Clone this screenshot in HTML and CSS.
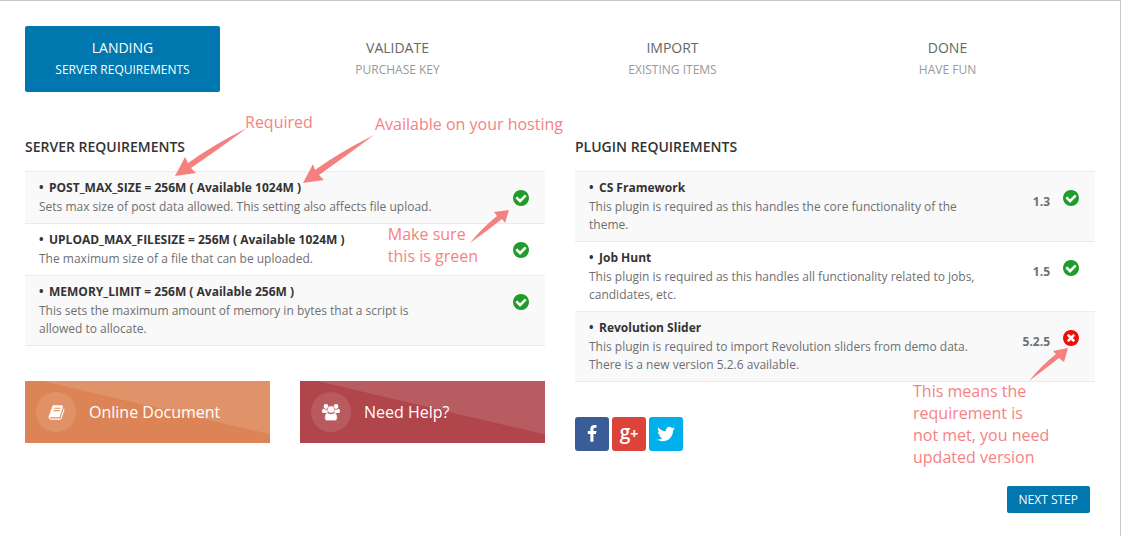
FILE: index.html
```html
<!DOCTYPE html>
<html lang="en">
<head>
<meta charset="utf-8">
<title>Server Requirements</title>
<link rel="stylesheet" href="styles.css">
</head>
<body>
<svg class="sprite" aria-hidden="true">
  <symbol id="check" viewBox="128 128 1536 1536"><path d="M1412 734q0-28-18-46l-91-90q-19-19-45-19t-45 19l-408 407-226-226q-19-19-45-19t-45 19l-91 90q-18 18-18 46 0 27 18 45l362 362q19 19 45 19 27 0 46-19l543-543q18-18 18-45zm252 162q0 209-103 385.5t-279.5 279.5-385.5 103-385.5-103-279.5-279.5-103-385.5 103-385.5 279.5-279.5 385.5-103 385.5 103 279.5 279.5 103 385.5z"/></symbol>
  <symbol id="cross" viewBox="128 128 1536 1536"><path d="M1277 1122q0-26-19-45l-181-181 181-181q19-19 19-45 0-27-19-46l-90-90q-19-19-46-19-26 0-45 19l-181 181-181-181q-19-19-45-19-27 0-46 19l-90 90q-19 19-19 46 0 26 19 45l181 181-181 181q-19 19-19 45 0 27 19 46l90 90q19 19 46 19 26 0 45-19l181-181 181 181q19 19 45 19 27 0 46-19l90-90q19-19 19-46zm387-226q0 209-103 385.5t-279.5 279.5-385.5 103-385.5-103-279.5-279.5-103-385.5 103-385.5 279.5-279.5 385.5-103 385.5 103 279.5 279.5 103 385.5z"/></symbol>
</svg>
<main class="wizard">
  <nav class="steps" aria-label="Setup steps">
    <a class="step step-active" href="#landing" aria-current="step"><span class="step-name">LANDING</span><span class="step-note">SERVER REQUIREMENTS</span></a>
    <a class="step" href="#validate"><span class="step-name">VALIDATE</span><span class="step-note">PURCHASE KEY</span></a>
    <a class="step" href="#import"><span class="step-name">IMPORT</span><span class="step-note">EXISTING ITEMS</span></a>
    <a class="step" href="#done"><span class="step-name">DONE</span><span class="step-note">HAVE FUN</span></a>
  </nav>
  <div class="columns">
    <section class="column">
      <h2 class="heading">SERVER REQUIREMENTS</h2>
      <ul class="list">
        <li class="row">
          <div class="info"><h3 class="name">POST_MAX_SIZE = 256M ( Available 1024M )</h3><p class="desc">Sets max size of post data allowed. This setting also affects file upload.</p></div>
          <svg class="status ok" role="img" aria-label="Met"><use href="#check"/></svg>
        </li>
        <li class="row">
          <div class="info"><h3 class="name">UPLOAD_MAX_FILESIZE = 256M ( Available 1024M )</h3><p class="desc">The maximum size of a file that can be uploaded.</p></div>
          <svg class="status ok" role="img" aria-label="Met"><use href="#check"/></svg>
        </li>
        <li class="row">
          <div class="info"><h3 class="name">MEMORY_LIMIT = 256M ( Available 256M )</h3><p class="desc">This sets the maximum amount of memory in bytes that a script is allowed to allocate.</p></div>
          <svg class="status ok" role="img" aria-label="Met"><use href="#check"/></svg>
        </li>
      </ul>
      <div class="cards">
        <a class="card card-docs" href="#docs">
          <span class="badge"><svg class="badge-icon" viewBox="0 0 1792 1792" aria-hidden="true"><path d="M1703 478q40 57 18 129l-275 906q-19 64-76.5 107.5t-122.5 43.5h-923q-77 0-148.5-53.5t-99.5-131.5q-24-67-2-127 0-4 3-27t4-37q1-8-3-21.5t-3-19.5q2-11 8-21t16.5-23.5 16.5-23.5q23-38 45-91.5t30-91.5q3-10 .5-30t-.5-28q3-11 17-28t17-23q21-36 42-92t25-90q1-9-2.5-32t.5-28q4-13 22-30.5t22-22.5q19-26 42.5-84.5t27.5-96.5q1-8-3-25.5t-2-26.5q2-8 9-18t18-23 17-21q8-12 16.5-30.5t15-35 16-36 19.5-32 26.5-23.5 36-11.5 47.5 5.5l-1 3q38-9 51-9h761q74 0 114 56t18 130l-274 906q-36 119-71.5 153.5t-128.5 34.5h-869q-27 0-38 15-11 16-1 43 24 70 144 70h923q29 0 56-15.5t35-41.5l300-987q7-22 5-57 38 15 59 43zm-1064 2q-4 13 2 22.5t20 9.5h608q13 0 25.5-9.5t16.5-22.5l21-64q4-13-2-22.5t-20-9.5h-608q-13 0-25.5 9.5t-16.5 22.5zm-83 256q-4 13 2 22.5t20 9.5h608q13 0 25.5-9.5t16.5-22.5l21-64q4-13-2-22.5t-20-9.5h-608q-13 0-25.5 9.5t-16.5 22.5z"/></svg></span>
          <span class="card-text">Online Document</span>
        </a>
        <a class="card card-help" href="#help">
          <span class="badge"><svg class="badge-people" viewBox="0 0 18 17" aria-hidden="true"><circle cx="4" cy="2.5" r="2.4"/><circle cx="14" cy="2.5" r="2.4"/><path d="M0 7.5C0 5.500 .8 4.800 1.600 4.800Q4 6.400 6 5V9H1.500Q0 9 0 7.500zM18 7.500C18 5.500 17.200 4.800 16.400 4.800Q14 6.400 12 5V9H16.500Q18 9 18 7.500z"/><g class="badge-front"><circle cx="9" cy="5.500" r="3.700"/><path d="M2.700 13.900C2.700 10.500 3.700 8.700 5.500 8.700Q9 11.400 12.500 8.700C14.300 8.700 15.300 10.500 15.300 13.900Q15.300 16.700 12.700 16.700H5.300Q2.700 16.700 2.700 13.900z"/></g></svg></span>
          <span class="card-text">Need Help?</span>
        </a>
      </div>
      <svg class="arrow arrow-required" viewBox="174 127 74 50" aria-hidden="true"><path d="M175 176L185 157L188 163Q213 145 247 128Q219 149 191 168L196 173z"/></svg>
      <p class="note note-required">Required</p>
      <svg class="arrow arrow-available" viewBox="302 134 74 50" aria-hidden="true"><path d="M303 183L313 164L315 170Q340 152 374 135Q346 156 319 175L324 180z"/></svg>
      <p class="note note-available">Available on your hosting</p>
      <svg class="arrow arrow-green" viewBox="469 209 41 35" aria-hidden="true"><path d="M509 210L494 212L497 216Q482 228 470 243Q487 231 502 219L505 223z"/></svg>
      <p class="note note-green">Make sure<br>this is green</p>
    </section>
    <section class="column">
      <h2 class="heading">PLUGIN REQUIREMENTS</h2>
      <ul class="list">
        <li class="row">
          <div class="info"><h3 class="name">CS Framework</h3><p class="desc">This plugin is required as this handles the core functionality of the theme.</p></div>
          <span class="version">1.3</span><svg class="status ok" role="img" aria-label="Met"><use href="#check"/></svg>
        </li>
        <li class="row">
          <div class="info"><h3 class="name">Job Hunt</h3><p class="desc">This plugin is required as this handles all functionality related to jobs, candidates, etc.</p></div>
          <span class="version">1.5</span><svg class="status ok" role="img" aria-label="Met"><use href="#check"/></svg>
        </li>
        <li class="row">
          <div class="info"><h3 class="name">Revolution Slider</h3><p class="desc">This plugin is required to import Revolution sliders from demo data. There is a new version 5.2.6 available.</p></div>
          <span class="version">5.2.5</span><svg class="status bad" role="img" aria-label="Not met"><use href="#cross"/></svg>
        </li>
      </ul>
      <div class="social">
        <a class="social-link facebook" href="#facebook" aria-label="Facebook"><svg class="social-icon" viewBox="0 0 1792 1792" aria-hidden="true"><path d="M1343 12v264h-157q-86 0-116 36t-30 108v189h293l-39 296h-254v759h-306v-759h-255v-296h255v-218q0-186 104-288.500t277-102.500q147 0 228 12z"/></svg></a>
        <a class="social-link google" href="#google" aria-label="Google Plus"><span class="google-g">g</span><span class="google-plus">+</span></a>
        <a class="social-link twitter" href="#twitter" aria-label="Twitter"><svg class="social-icon social-bird" viewBox="0 0 1792 1792" aria-hidden="true"><path d="M1684 408q-67 98-162 167 1 14 1 42 0 130-38 259.500t-115.500 248.500-184.500 210.500-258 146-323 54.500q-271 0-496-145 35 4 78 4 225 0 401-138-105-2-188-64.500t-114-159.500q33 5 61 5 43 0 85-11-112-23-185.500-111.500t-73.500-205.500v-4q68 38 146 41-66-44-105-115t-39-154q0-88 44-163 121 149 294.500 238.500t371.500 99.500q-8-38-8-74 0-134 94.500-228.500t228.500-94.500q140 0 236 102 109-21 205-78-37 115-142 178 93-10 186-50z"/></svg></a>
      </div>
      <svg class="arrow arrow-version" viewBox="1027 347 42 35" aria-hidden="true"><path d="M1068 348L1053 351L1056 354Q1041 366 1029 381Q1045 369 1059 358L1064 362z"/></svg>
      <p class="note note-version">This means the<br>requirement is<br>not met, you need<br>updated version</p>
    </section>
  </div>
  <div class="actions"><button class="next" type="button">NEXT STEP</button></div>
</main>
</body>
</html>
```
FILE: styles.css
```css
* { box-sizing: border-box; }
body {
  margin: 0;
  background: #fff;
  font-family: "Open Sans", sans-serif;
  font-size: 12px;
  color: #6f6f6f;
}
h2, h3, p, ul { margin: 0; padding: 0; }
a { text-decoration: none; }
.sprite { display: none; }
.wizard {
  min-height: 100vh;
  padding: 25px 25px 23px;
  border-top: 1px solid #c8c8c8;
  border-right: 1px solid #c8c8c8;
}
.steps {
  display: grid;
  grid-template-columns: repeat(4, 1fr);
  gap: 80px;
  padding-right: 50px;
}
.step {
  display: flex;
  flex-direction: column;
  padding: 11px 0;
  border-radius: 2px;
  text-align: center;
  line-height: 22px;
  color: #999;
}
.step-name { font-size: 14px; color: #666; }
.step-active, .step-active .step-name { color: #fff; }
.step-active { background: #0077ae; }

.columns {
  display: grid;
  grid-template-columns: 1fr 1fr;
  gap: 30px;
  margin-top: 45px;
}
.column { position: relative; }
.heading {
  margin-bottom: 14px;
  font-size: 14px;
  line-height: 20px;
  font-weight: 600;
  color: #333;
}
.list { list-style: none; border-bottom: 1px solid #ebebeb; }
.row {
  display: flex;
  align-items: flex-start;
  padding: 6px 15px 7px 14px;
  border-top: 1px solid #ebebeb;
}
.row:nth-child(odd) { background: #f9f9f9; }
.info { width: 400px; margin-right: auto; }
.name { font-size: 12px; line-height: 20px; font-weight: 700; color: #333; }
.name::before { content: "•"; display: inline-block; width: 10px; }
.desc { line-height: 18px; }
.version { margin: 14px 12px 0 0; line-height: 20px; font-weight: 700; }
.status { flex: none; width: 18px; height: 16px; margin-top: 12px; }
.ok { fill: #1f9c2b; }
.bad { fill: #f50a0a; }

.cards { display: grid; grid-template-columns: 1fr 1fr; gap: 30px; margin-top: 35px; }
.card {
  position: relative;
  display: flex;
  align-items: center;
  gap: 13px;
  padding: 11px;
  color: #fff;
}
.card::before {
  content: "";
  position: absolute;
  inset: 0;
  background: rgba(255, 255, 255, .12);
  clip-path: polygon(7% 0, 100% 0, 100% 86%);
}
.card-docs { background: #dc8455; }
.card-help { background: #b0464c; }
.badge {
  position: relative;
  display: grid;
  place-items: center;
  width: 40px;
  height: 40px;
  border-radius: 50%;
  background: #e19166;
}
.card-help .badge { background: #b95a5f; }
.badge-icon { width: 17px; height: 17px; fill: #fff; }
.badge-people { width: 18px; height: 17px; fill: #fff; }
.badge-front { stroke: #b95a5f; stroke-width: .6; }
.card-text { position: relative; font-size: 16px; line-height: 22px; }

.social { display: flex; gap: 3px; margin-top: 35px; }
.social-link {
  display: flex;
  align-items: center;
  justify-content: center;
  width: 34px;
  height: 34px;
  border-radius: 3px;
  color: #fff;
}
.social-icon { width: 18px; height: 18px; fill: #fff; }
.social-bird { width: 20px; height: 20px; }
.facebook { background: #3b5d97; }
.google { background: #dc4339; }
.twitter { background: #00b0ed; }
.google-g { font-size: 19px; line-height: 20px; padding-bottom: 5px; font-weight: 600; }
.google-plus { font-size: 14px; line-height: 14px; font-weight: 700; }

.actions { display: flex; justify-content: flex-end; margin-top: 35px; padding-right: 5px; }
.next {
  padding: 0 12px;
  border: 0;
  border-radius: 2px;
  background: #0077ae;
  font: 12px/27px "Open Sans", sans-serif;
  color: #fff;
}

/* Callouts drawn over the lists */
.note {
  position: absolute;
  font-family: "Open Sans", sans-serif;
  font-size: 16px;
  line-height: 22px;
  white-space: nowrap;
  color: #f58383;
}
.arrow { position: absolute; fill: #f58080; }
.note-required { left: 220px; top: -26px; }
.note-available { left: 350px; top: -24px; }
.note-green { right: 67px; top: 86px; }
.note-version { left: 338px; top: 243px; }
.arrow-required { left: 149px; top: -10px; width: 74px; height: 50px; }
.arrow-available { left: 277px; top: -3px; width: 74px; height: 50px; }
.arrow-green { right: 35px; top: 72px; width: 41px; height: 35px; }
.arrow-version { right: 26px; top: 210px; width: 42px; height: 35px; }
```
